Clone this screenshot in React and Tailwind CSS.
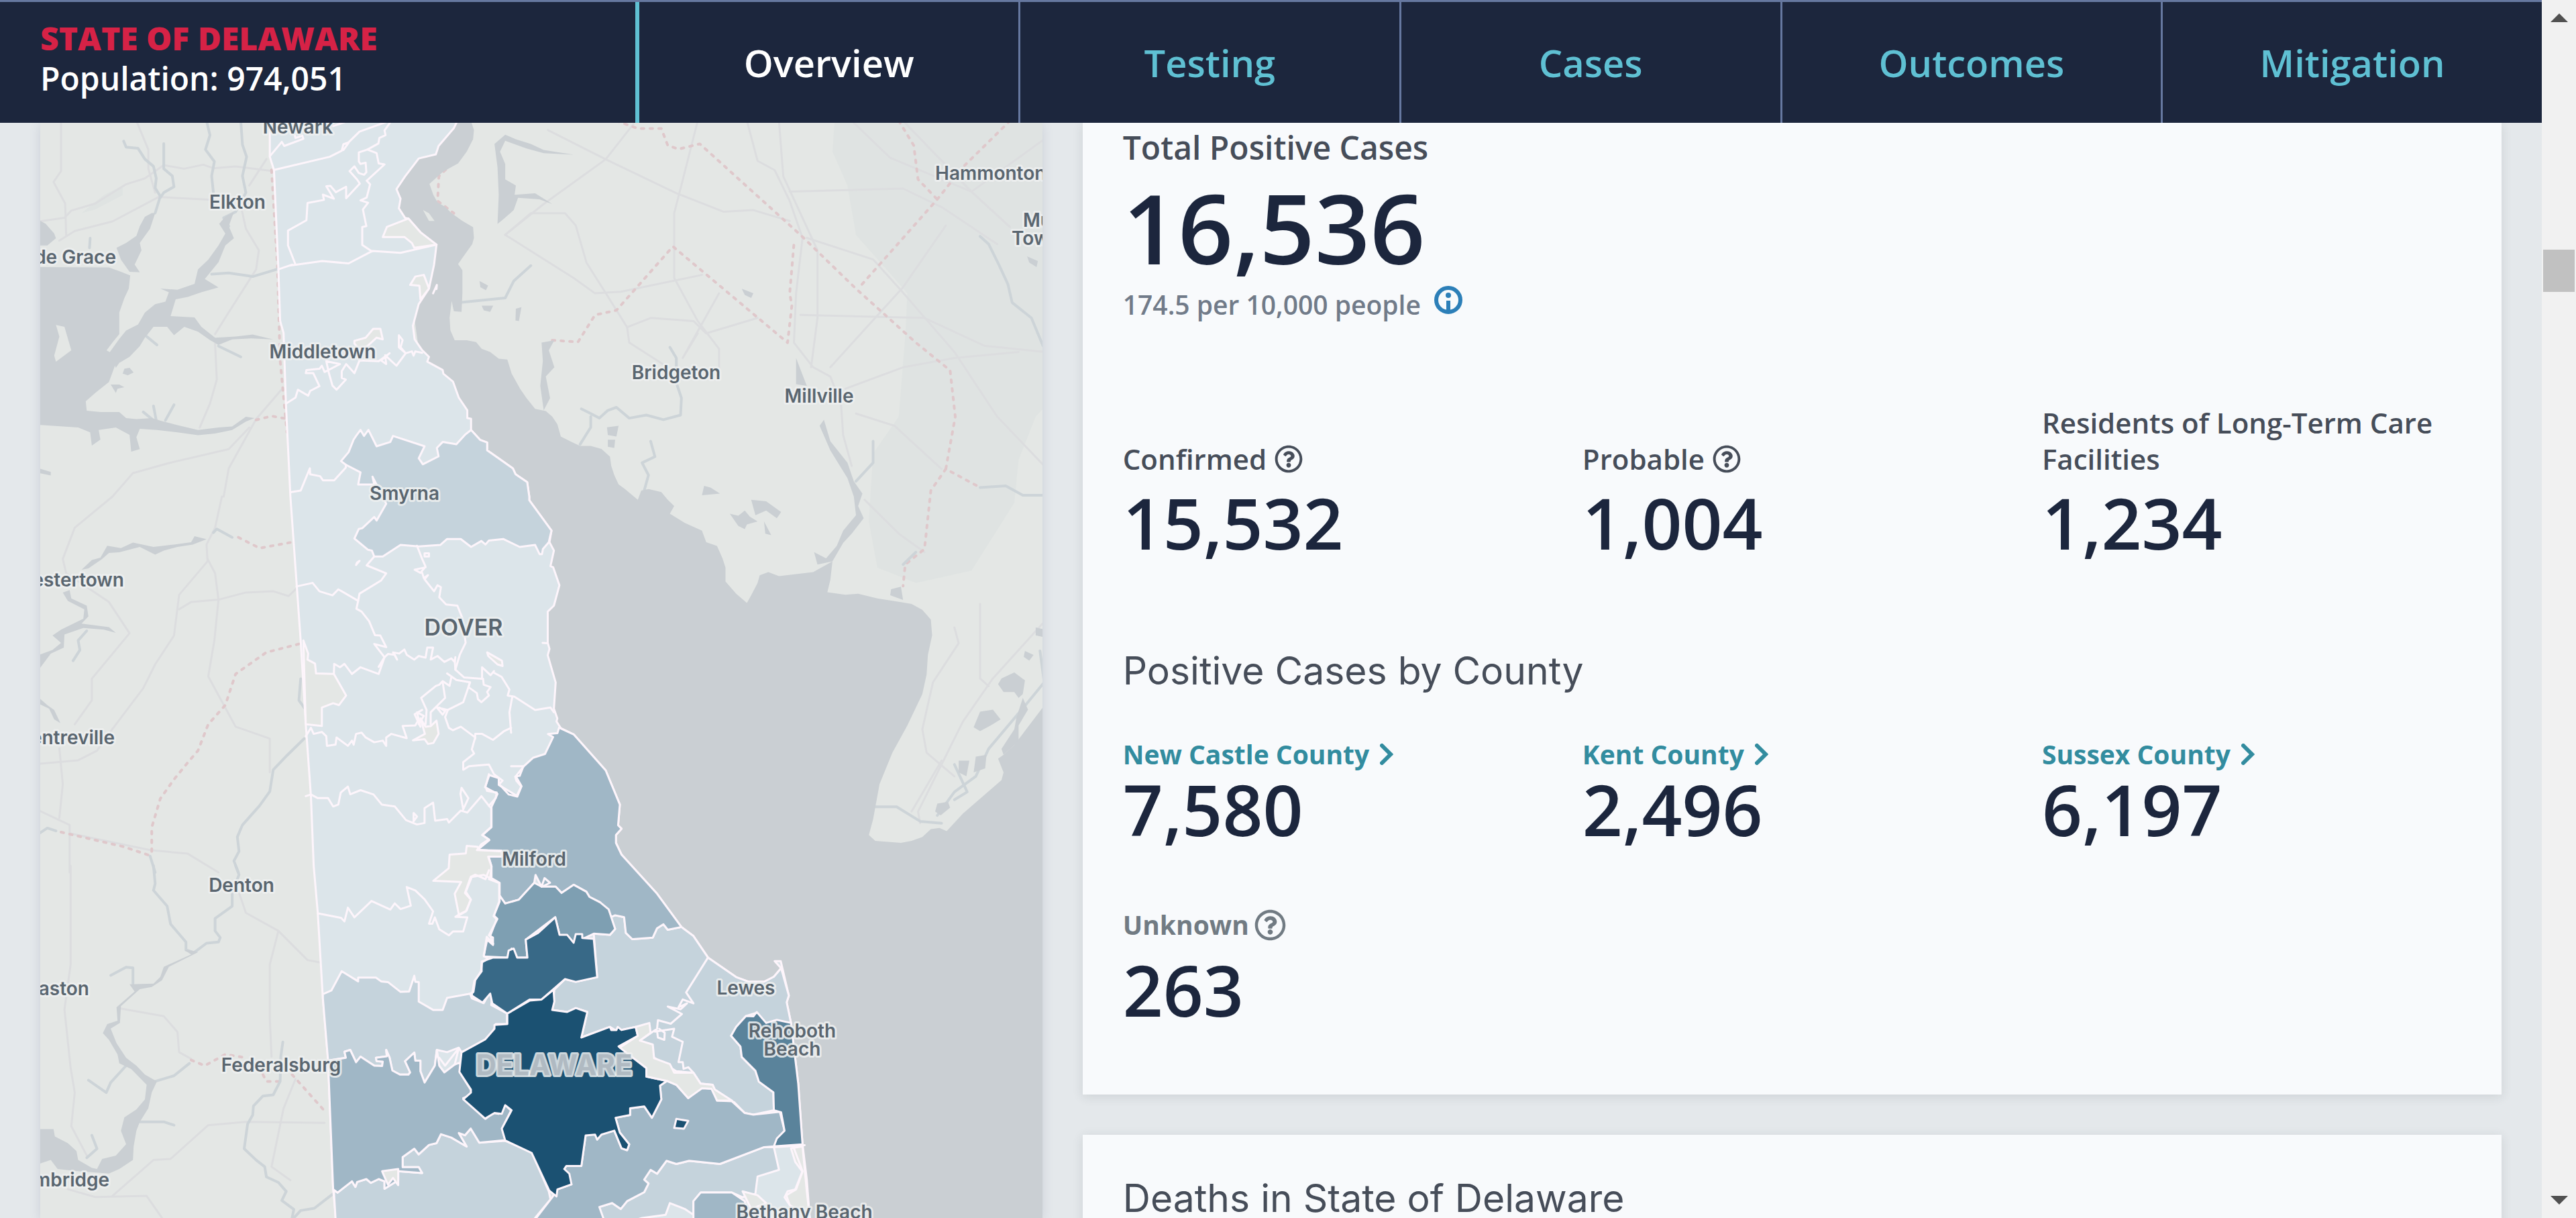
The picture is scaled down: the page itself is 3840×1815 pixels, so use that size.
import { FaRegQuestionCircle } from "react-icons/fa";

/* ------------------------------------------------------------------ map */

// Map outlines are digitised per tile; each tile has its own origin and scale.
const TILES = {
  a: [40, 180, 1.96, 2.8],
  b: [40, 740, 1.96, 2.8],
  c: [40, 1290, 1.96, 2.987],
  d: [600, 180, 1.568, 2.178],
  e: [600, 900, 1.568, 1.7137],
};

function toPath(src) {
  let tile = TILES.a;
  let cmd = "M";
  let out = "";
  for (const t of src.trim().split(/\s+/)) {
    if (TILES[t]) tile = TILES[t];
    else if (t === "M") cmd = "M";
    else if (t === "Z") {
      out += "Z";
      cmd = "M";
    } else {
      const [x, y] = t.split(",").map(Number);
      out += `${cmd}${(tile[0] + x / tile[2]).toFixed(1)} ${(tile[1] + y / tile[3]).toFixed(1)}`;
      cmd = "L";
    }
  }
  return out;
}

const COAST_NORTH =
  "a 1258,0 1248,30 1203,105 1195,140 1145,157 1105,232 1080,285 1092,325 1087,365 1105,405 1115,408 1150,465 1197,517 1190,600 1175,700 1145,765 1128,855 1133,912 1155,957 1175,985 1170,1005 1215,1040 1217,1055 1245,1088 1262,1155 1287,1208 1287,1240 1298,1243 1298,1290 1325,1332 1345,1342 1345,1375 1375,1405 1420,1450 1428,1475 1462,1508 1468,1568 b 1468,15 1533,142 1527,190 1540,225 1530,290 1538,295 1556,370 1540,455 1522,480 1522,610 1527,635 1522,662 1545,775 1540,885 1550,925";
const COAST_SOUTH =
  "e 360,300 370,317 400,333 475,425 508,512 504,565 512,574 499,590 499,610 512,640 595,740 652,825 680,848 714,903 780,953 810,965 845,965 868,952 885,930 870,912 884,912 903,1000 898,1017 908,1070 925,1225 935,1380 945,1470 952,1568";
const DELAWARE = `${COAST_NORTH} ${COAST_SOUTH} e 952,1600 c 904,1600 903,1568 895,1440 880,860 865,590 850,210 838,0 b 830,1250 815,950 800,600 770,0 a 757,1180 750,885 740,835 735,620 722,205 710,150 710,0 Z`;

const BAY =
  "d 160,0 167,30 165,60 150,100 130,138 95,165 63,205 72,240 82,265 98,278 115,300 140,325 165,345 167,380 163,400 140,445 130,465 140,485 140,560 138,620 120,618 115,585 110,640 112,680 122,712 150,712 172,718 185,740 205,750 225,772 245,775 255,820 275,870 290,900 310,935 335,942 350,960 362,985 370,1025 395,1042 415,1055 440,1055 465,1065 485,1090 488,1120 495,1150 505,1180 520,1195 550,1230 558,1200 575,1195 605,1205 620,1230 635,1250 625,1275 660,1305 700,1330 710,1368 735,1380 748,1420 755,1450 755,1495 780,1535 805,1565 815,1540 830,1500 835,1475 855,1465 880,1478 960,1465 1005,1430 1000,1490 993,1530 1035,1538 1065,1535 1110,1550 1165,1562 e 1190,0 1215,15 1235,40 1238,80 1228,130 1225,180 1215,230 1180,310 1145,380 1115,460 1105,520 1100,550 1090,590 1105,605 1165,610 1190,605 1215,595 1235,575 1255,572 1272,580 1310,535 1400,450 1405,430 1392,395 1405,385 1430,360 1496,265 1520,265 1520,1600 800,1600 700,1200 300,600 250,250 d 250,1400 100,1000 a 1150,1000 1100,500 d -20,100 80,0 Z";

const WATERS = [
  "a 30,410 55,430 80,470 85,490 60,520 30,520 Z",
  "a 30,610 240,612 275,630 302,645 298,700 285,740 270,800 270,890 250,925 233,958 248,970 258,1020 240,1090 200,1135 172,1170 175,1210 215,1215 270,1215 290,1240 320,1245 365,1240 400,1255 440,1270 500,1290 560,1280 600,1275 640,1235 665,1240 640,1255 600,1290 550,1305 500,1312 440,1300 380,1290 330,1285 320,1320 330,1370 305,1380 300,1310 260,1280 210,1290 215,1330 190,1355 185,1300 150,1280 30,1268 Z",
  "a 260,1030 240,970 270,910 290,875 325,850 345,800 375,765 405,755 415,715 390,700 440,705 490,680 500,620 530,580 560,520 580,470 562,430 580,400 605,380 590,440 605,490 580,520 560,590 520,660 560,695 510,715 470,735 435,745 420,815 490,820 510,860 550,905 610,900 660,892 720,912 655,908 600,912 560,935 535,915 500,880 460,860 430,895 410,860 370,860 345,905 330,940 300,985 270,1010 Z",
  "a 365,385 345,400 330,440 320,480 290,510 262,530 275,580 300,630 330,632 315,600 335,540 330,510 360,450 375,385 Z",
  "a 285,1035 300,1030 312,1050 295,1062 280,1055 Z",
  "a 245,1100 270,1100 285,1112 265,1118 260,1135 Z",
  "a 36,1450 70,1465 70,1480 36,1470 Z",
  "c 30,1172 78,1172 82,1205 120,1235 145,1270 150,1310 190,1345 205,1350 220,1305 260,1290 290,1240 275,1180 285,1120 320,1085 345,1040 350,975 305,905 270,880 265,840 240,775 222,745 235,705 265,690 262,630 315,560 300,528 370,525 390,495 400,450 480,395 460,375 490,380 500,385 415,450 395,510 365,540 330,550 275,625 272,700 245,725 262,790 290,855 320,890 345,930 380,960 365,1010 355,1080 330,1140 320,1180 312,1250 310,1310 270,1350 240,1370 150,1360 90,1350 70,1310 30,1330 Z",
  "b 36,660 75,640 100,610 75,580 100,555 165,510 168,470 120,435 105,400 125,390 130,425 175,455 180,500 160,530 240,545 260,568 225,555 165,548 110,575 108,630 70,655 36,720 Z",
  "b 160,305 190,265 215,255 235,205 275,215 310,192 370,210 430,200 480,190 490,165 525,178 485,200 440,210 400,225 375,242 330,210 270,232 240,235 220,260 180,300 Z",
  "b 36,840 60,870 80,890 98,945 80,930 65,885 36,865 Z",
  "d 215,75 240,45 265,60 300,75 330,95 400,110 330,105 290,90 240,65 228,100 240,140 240,190 265,210 262,240 310,235 350,270 320,255 270,250 260,290 235,320 222,335 225,240 222,150 Z",
  "d 325,720 355,712 342,745 355,800 335,830 345,900 330,940 322,860 328,780 Z",
  "d 920,770 945,860 920,855 Z",
  "d 985,970 1000,1040 1040,1110 1055,1170 1075,1210 1065,1250 1078,1290 1050,1340 1030,1370 1005,1430 970,1440 962,1400 990,1420 1015,1380 1030,1330 1060,1280 1055,1220 1040,1160 1000,1070 975,990 Z",
  "d 765,1275 785,1282 800,1265 812,1285 830,1300 805,1310 800,1325 785,1315 Z",
  "d 815,1230 850,1235 885,1270 875,1290 850,1265 825,1280 Z",
  "d 845,1300 862,1345 848,1340 Z",
  "d 705,1185 720,1190 742,1210 700,1215 Z",
  "d 478,995 505,990 500,1025 480,1020 Z",
  "d 480,1035 497,1035 495,1062 480,1058 Z",
  "d 180,520 200,535 195,550 182,540 Z",
  "d 185,600 212,600 205,620 190,615 Z",
  "d 265,610 278,605 272,650 264,648 Z",
  "d 793,545 820,560 815,575 800,565 Z",
  "d 1460,440 1485,455 1482,475 1465,460 Z",
  "d 1142,1520 1165,1512 1170,1555 1140,1540 Z",
  "e 1400,190 1430,175 1455,195 1450,230 1440,240 1430,225 1405,225 1392,205 Z",
  "e 1350,275 1380,270 1398,295 1375,310 1350,325 1335,315 Z",
  "e 1455,120 1475,130 1465,145 1452,135 Z",
  "e 1340,390 1365,385 1362,420 1335,430 Z",
  "e 1300,400 1325,400 1318,440 1300,430 Z",
  "e 1250,510 1275,505 1280,520 1258,540 1245,530 Z",
  "e 1450,240 1462,270 1440,310 1440,350 1405,385 1400,370 1430,320 1435,290 Z",
  "e 1480,60 1500,65 1500,85 1480,80 Z",
];

// Narrow creeks and rivers drawn as strokes.
const CREEKS = [
  "a 283,85 290,110 325,115 345,160 370,190 378,240 375,280 390,315 375,385",
  "a 400,95 400,200 425,230 430,275 400,300 390,320",
  "a 525,0 535,60 522,120 548,170 540,230 545,300",
  "a 625,0 630,100 642,150 630,230 640,300 610,380 575,405 590,440",
  "a 540,640 590,635 660,650 735,618",
  "a 350,900 380,935",
  "a 185,490 183,530",
  "a 560,940 625,985",
  "a 340,1215 370,1250 M 370,1190 378,1250 M 430,1185 405,1250",
  "b 600,170 555,135 545,150",
  "b 175,560 150,600 155,640 135,685",
  "b 800,760 795,850 835,930",
  "b 810,1010 760,1080 720,1140 710,1230 680,1290 630,1370 615,1420 620,1480 605,1520 618,1568",
  "b 36,1405 60,1383 85,1395",
  "b 360,1500 375,1568",
  "c 370,0 375,80 370,110 410,180 420,260 465,340 465,375 485,385",
  "c 610,0 620,40 600,120 600,180 550,235 550,290 565,320 560,340 525,345 490,385",
  "c 310,525 310,455 290,452 245,488",
  "c 180,955 232,1010 245,965 290,890",
  "c 375,960 430,935 475,880",
  "c 748,785 742,850 740,960 720,1020 690,1025 662,1070 660,1110 645,1150 635,1260 670,1310 695,1340 700,1385 735,1410 758,1450 745,1490 780,1530 775,1568",
  "c 780,1568 800,1535 840,1525 895,1460",
  "c 330,1140 400,1140 430,1155",
  "c 190,1200 205,1260 175,1300",
  "d 418,935 440,950 460,965 480,940 500,930 530,965 570,955 610,970 650,955 652,900 640,850 640,770 625,735",
  "d 440,960 440,995 415,1050",
  "d 580,1040 590,1090 560,1110 575,1150 565,1200",
  "d 1350,375 1370,400 1395,470 1415,530 1425,590 1470,640 1497,730",
  "d 1350,1190 1410,1185 1450,1215 1497,1215",
  "d 1060,1170 1100,1110 1100,1040",
  "d 130,590 240,575 260,520 300,470",
  "d 1170,1440 1200,1400",
  "e 1105,518 1155,518 1210,555 1260,560",
  "e 1490,120 1500,200 1455,260 1370,370 1340,440 1290,480 1250,540",
  "e 1290,410 1320,480 1290,500",
];

const ROADS = [
  "a 36,420 110,405 130,375 200,345 290,265 345,240 400,185 460,200 515,183 545,198 610,190 720,210",
  "a 95,500 140,460 250,420 385,318 550,330",
  "a 100,0 100,210 78,255 112,345 115,480",
  "a 320,0 355,120 355,200 375,300",
  "a 620,320 640,450 678,540 670,620 585,810 550,890",
  "a 550,930 555,1080 535,1180 505,1280",
  "a 745,1120 670,1245 590,1450 575,1568",
  "a 250,1568 310,1470 410,1430 590,1370 650,1280",
  "a 700,160 650,270",
  "b 570,0 550,130 525,200 528,270 445,410 430,580 375,700 340,800 250,970",
  "b 528,260 550,320 560,430 548,600 530,750 610,960 710,1010 710,1150",
  "b 445,470 480,440 560,430 640,400 720,395 765,415 790,380",
  "b 250,0 140,130 105,260 115,320 240,440 300,570 190,760 190,850 140,950",
  "b 95,1050 105,1200 95,1340",
  "b 36,1115 150,1100 205,1060 250,970",
  "b 36,1310 125,1370 125,1568",
  "b 125,1405 360,1475 470,1490 560,1568",
  "c 128,0 128,440 110,640 128,900 140,1010 130,1160 175,1290",
  "c 620,120 640,210 735,290 820,420 855,430",
  "c 735,290 710,440 710,680 715,850",
  "c 270,635 400,670 440,740 445,830 480,860",
  "c 250,1470 370,1310 420,1305 530,1155 640,1140 870,1145",
  "c 120,1440 200,1475 350,1470 395,1568",
  "c 785,950 750,1080 715,1340 770,1400",
  "d 805,0 830,130 870,160 905,260 935,380 920,560 915,720 960,800 1000,830 1025,920 1030,1020 1050,1120",
  "d 340,30 475,125 640,235 750,295 820,290 905,325",
  "d 540,10 475,125 330,270 240,370",
  "d 690,0 650,220 635,300 635,510 690,650 740,740 740,830",
  "d 240,370 300,300 380,300 405,340 430,460 480,570 525,670 530,720 620,800",
  "d 240,370 400,510 450,560 510,555 700,500",
  "d 880,0 890,180 970,420 970,640 955,800",
  "d 905,230 1170,220 1260,280 1390,400",
  "d 1170,0 1330,230 1420,345",
  "d 1050,0 1140,120 1330,230 1500,60",
  "d 945,380 1100,450 1165,550 1290,750 1390,960 1500,1120",
  "d 1270,340 1170,540 1000,800",
  "d 930,630 1220,640 1360,730 1500,750",
  "d 1035,870 1170,800 1290,770 1440,750",
  "d 1060,950 1150,990 1260,1130",
  "d 525,670 580,640 680,650 710,690 830,640",
  "d 690,690 655,770 740,560",
  "d 1080,1230 1160,1340 1220,1400",
  "e 1496,50 1380,190 1310,300 1205,530 1210,560",
  "e 1350,0 1350,190 1370,210",
  "e 1290,60 1300,100 1240,200 1215,320 1225,380 1290,440",
  "e 1260,400 1190,530",
];

const RAILS = [
  "d 500,0 550,25 605,25 620,80 645,92 695,75 930,370 1060,545 1200,720 1280,810 1292,960 1270,1130 1350,1190",
  "d 1270,1130 1235,1200 1220,1390 1175,1440 1170,1510",
  "d 350,712 410,718 450,630 500,615 632,408 900,720 910,600 905,560 915,400",
  "d 1160,0 1195,80 1205,190 1250,255",
  "d 1420,0 1310,150 1250,255 1065,545",
  "d 145,100 85,180 82,260 120,300",
  "b 618,170 680,215 775,190",
  "b 795,615 700,650 610,740 580,870 530,950 500,1060 470,1110 430,1180 390,1260 365,1380 365,1490",
  "b 100,1400 280,1460 365,1500",
  "a 670,1248 715,1232 755,1242",
  "a 715,205 732,600 740,1000 760,1300",
  "c 480,865 520,890 580,840 640,855",
  "c 690,930 700,960 740,960",
  "c 775,930 875,1100",
];

const SCRUB = [
  "d 1010,0 1005,100 1040,210 1060,370 1130,480 1180,560 1175,700 1160,960 1100,1080 1090,1300 1110,1450 1200,1500 1330,1460 1430,1240 1440,1100 1480,960 1500,930 1500,0 Z",
  "a 160,385 225,310 280,270 280,310 200,370 Z",
];

const REGIONS = [
  {
    fill: "#c5d3dc",
    shapes: [
      "a 955,1330 962,1315 975,1290 985,1315 998,1290 1022,1358 1062,1340 1070,1315 1162,1358 1145,1408 1157,1433 1203,1400 1198,1365 1215,1340 1255,1350 1280,1310 1298,1290 1325,1332 1345,1342 1345,1375 1375,1405 1420,1450 1428,1475 1462,1508 1468,1568 b 1468,15 1533,142 1525,190 1508,218 1505,240 1498,240 1485,202 1440,210 1392,177 1350,183 1340,200 1328,185 1298,210 1268,177 1228,177 1208,202 1145,208 1092,202 1040,250 1015,250 1008,225 997,222 957,175 970,135 980,132 1015,85 1022,100 1050,30 a 1022,1518 1010,1485 1015,1518 968,1518 975,1467 932,1435 918,1420 940,1383 Z",
      "c 865,590 865,572 890,555 920,470 968,515 968,498 1020,498 1035,515 1055,518 1092,562 1117,560 1132,490 1135,517 1145,518 1145,605 1187,642 1215,642 1228,588 1295,570 1300,590 1335,612 1350,570 1360,577 1357,620 1403,658 1403,705 1370,705 1363,740 1340,778 1270,830 1262,810 1228,830 1198,820 1192,890 1162,965 1150,915 1150,868 1135,868 1132,832 1105,870 1120,920 1115,930 1090,930 1068,912 1060,855 1050,820 1052,848 1020,855 1022,870 1040,872 1038,892 1015,890 985,860 975,850 962,875 945,820 928,828 932,855 880,868 Z",
      "c 903,1600 897,1445 908,1455 950,1405 960,1430 965,1408 992,1395 1005,1412 1028,1395 1045,1405 1045,1438 1085,1400 1085,1360 1155,1368 1145,1342 1098,1342 1098,1297 1132,1260 1145,1285 1175,1243 1197,1235 1210,1195 1240,1210 1285,1250 1262,1190 1280,1200 1297,1170 1322,1233 1398,1225 1475,1275 1525,1450 1530,1485 1485,1568 1480,1600 Z",
      "e 447,842 485,845 497,830 486,800 497,795 518,800 522,840 537,856 585,852 595,828 610,818 620,832 652,825 680,848 714,903 780,953 810,965 845,965 868,952 885,930 903,1000 898,1017 908,1070 870,1065 850,1075 825,1045 803,1052 780,1080 768,1103 790,1130 793,1157 825,1192 833,1220 867,1247 868,1293 820,1304 800,1300 775,1272 735,1255 725,1228 697,1225 680,1197 640,1193 590,1160 555,1115 575,1095 545,1080 500,1090 485,1080 418,1107 432,1042 405,1032 385,1042 350,1037 355,985 380,958 405,965 455,953 Z",
      "e 460,1600 460,1540 490,1530 510,1545 525,1525 565,1502 575,1480 565,1470 580,1445 595,1455 617,1422 640,1430 670,1422 742,1430 845,1387 868,1387 880,1445 830,1462 825,1505 795,1515 770,1503 697,1503 680,1525 680,1560 660,1545 625,1530 615,1560 560,1568 Z",
    ],
  },
  {
    fill: "#a0b7c6",
    shapes: [
      "e 366,316 400,333 475,425 508,512 504,565 512,574 499,590 499,610 512,640 595,740 652,825 620,832 610,818 595,828 585,852 537,856 522,840 518,800 497,795 486,800 462,762 437,748 430,735 400,717 372,738 358,722 325,722 311,692 308,712 272,755 240,765 227,745 227,712 208,700 208,670 200,640 232,645 232,632 175,628 203,603 187,590 208,570 208,518 222,485 193,468 203,437 225,445 225,462 267,490 278,465 265,440 283,415 305,393 333,383 352,340 340,332 362,330 Z",
      "c 880,868 932,855 928,828 945,820 962,875 975,850 985,860 1015,890 1038,892 1040,872 1022,870 1020,855 1052,848 1050,820 1060,855 1068,912 1090,930 1115,930 1120,920 1105,870 1132,832 1135,868 1150,868 1150,915 1162,965 1192,890 1198,820 1205,890 1220,920 1250,885 1268,875 1265,920 1298,1000 1298,1020 1275,1035 1340,1127 1362,1100 1378,1105 1397,1065 1415,1090 1388,1170 1398,1222 1322,1233 1297,1170 1280,1200 1262,1190 1285,1250 1240,1210 1210,1195 1197,1235 1175,1243 1145,1285 1132,1260 1098,1297 1098,1342 1145,1342 1155,1368 1085,1360 1085,1400 1045,1438 1045,1405 1028,1395 1005,1412 992,1395 965,1408 960,1430 950,1405 908,1455 895,1440 Z",
      "e 618,1218 640,1228 668,1262 697,1235 725,1238 735,1268 770,1270 800,1300 820,1304 882,1297 893,1345 868,1385 845,1387 742,1430 670,1422 640,1430 617,1422 595,1455 580,1445 565,1470 575,1480 565,1502 525,1525 510,1545 490,1530 460,1540 480,1600 290,1600 350,1515 362,1495 395,1482 378,1443 383,1435 418,1435 428,1357 495,1345 512,1390 525,1395 530,1380 508,1350 498,1312 532,1305 532,1288 565,1283 583,1312 605,1265 602,1230 Z",
      "e 680,1600 680,1525 697,1503 770,1503 800,1525 815,1600 Z",
    ],
  },
  {
    fill: "#7e9fb2",
    shapes: [
      "e 227,745 240,765 272,755 308,712 325,722 358,722 372,738 400,717 430,735 437,748 462,762 482,780 497,830 485,845 447,842 402,865 367,845 357,800 288,857 292,903 268,903 255,880 245,903 190,900 197,850 212,868 205,848 220,805 213,797 227,760 Z",
    ],
  },
  {
    fill: "#386987",
    shapes: [
      "e 185,913 212,903 245,903 248,885 260,880 268,903 292,903 288,857 317,840 357,800 367,845 385,845 400,865 405,843 420,843 420,853 447,855 455,953 405,965 380,958 325,1010 297,1010 245,1046 210,1020 205,995 187,1018 162,1000 168,963 185,938 Z",
    ],
  },
  {
    fill: "#5a839b",
    shapes: [
      "e 803,1052 820,1053 828,1042 850,1070 875,1062 908,1070 925,1225 935,1380 868,1385 875,1365 893,1345 885,1298 868,1293 867,1247 833,1220 825,1192 793,1157 790,1130 768,1103 780,1080 Z",
    ],
  },
  {
    fill: "#1b5172",
    shapes: [
      "e 245,1046 297,1013 325,1010 353,985 355,1015 350,1037 385,1042 405,1032 432,1042 418,1107 485,1080 488,1088 500,1088 503,1080 512,1088 545,1080 550,1103 505,1130 540,1160 570,1185 570,1207 618,1218 602,1230 605,1265 583,1312 565,1283 532,1288 532,1305 498,1312 508,1350 530,1380 525,1395 512,1390 495,1345 465,1355 455,1368 450,1355 428,1357 418,1435 383,1435 378,1443 390,1455 395,1482 362,1495 360,1513 343,1498 302,1402 240,1370 232,1340 255,1293 240,1280 232,1302 215,1300 193,1314 142,1265 160,1248 160,1240 133,1195 138,1145 193,1112 215,1085 215,1075 245,1073 Z",
      "e 640,1315 668,1320 658,1340 635,1338 Z",
    ],
  },
];

// Unassigned land enclosed by ZIP-code borders.
const GAPS = [
  "a 1115,408 1150,465 1197,517 1132,530 1125,510 1103,485 1040,485 1052,443 Z",
  "a 1135,650 1160,643 1175,700 1150,745 1147,688 1120,685 Z",
  "a 957,930 957,918 990,905 1012,868 1033,868 1040,912 1022,905 995,940 970,950 Z",
  "b 808,600 822,655 820,680 842,697 845,738 897,740 933,830 912,870 895,862 862,880 862,957 815,950 Z",
  "b 1150,925 1165,960 1180,958 1197,935 1203,990 1188,1028 1172,1032 1162,1012 1128,1017 1163,990 Z",
  "b 1345,650 1388,685 1390,707 1375,700 1348,665 Z",
  "e 150,618 175,620 178,628 232,632 232,645 200,645 208,670 205,700 190,692 162,697 148,735 160,755 148,785 132,795 122,740 137,710 72,707 108,675 110,640 148,637 Z",
  "e 545,1080 577,1070 580,1095 555,1115 585,1125 588,1160 625,1175 635,1197 680,1197 697,1225 725,1228 730,1240 770,1268 735,1268 722,1238 700,1237 668,1262 640,1228 618,1218 570,1207 570,1185 540,1160 508,1133 550,1103 Z",
  "c 1038,1360 1085,1350 1085,1422 1070,1390 1055,1420 Z",
  "e 908,1390 935,1385 945,1500 952,1568 905,1535 897,1510 920,1495 935,1450 918,1425 Z",
  "e 795,1500 830,1510 850,1530 815,1545 Z",
];

const BORDERS = [
  // New Castle County
  "a 710,148 745,88 752,105 808,75 805,62 785,72 783,60 M 895,22 930,5",
  "a 722,205 885,150 920,125 925,98 940,90 972,45 1050,5 M 925,98 940,92 925,122",
  "a 1065,0 1045,40 1048,60 1030,72 1027,95 995,120 970,132 970,170 975,180 990,175 992,215 985,225 970,218 957,190 943,210 965,245 973,262 933,323 933,275 903,298 887,272 875,273 897,325 865,308 868,330 820,343 817,415 763,458 763,520 785,600",
  "a 995,120 1022,135 1028,178 1045,182 993,250 1003,265 993,320 975,332 997,342 982,370 992,440 980,443 980,518 1008,545",
  "a 735,620 765,605 863,585 940,595 1010,543 1092,551 1197,517 M 765,605 775,600",
  "a 757,1180 785,1155 792,1122 822,1147 828,1127 855,1107 837,1053 815,1053 817,1040 855,1035 862,1022 870,1048 915,1015 875,1003 882,1050 893,1105 905,1122 932,1080 920,1073 920,1045 933,1015 957,1053 972,1000 1028,1003 1060,970 1035,1000 1050,1015 1047,978 1080,1022 1107,970 1125,962 1130,980 1135,962 1155,968 M 1107,970 1087,945 1087,895 1098,915 1092,945 1107,970",
  "a 1187,720 1198,685 1197,702",
  "a 770,1550 800,1543 827,1450 828,1475 857,1483 865,1500 898,1500 932,1447 932,1435",
  // Kent County
  "b 1015,250 993,287 1050,320 1035,350 972,405 968,435 910,387 893,412 855,395 835,360 788,375 M 962,285 972,268 965,275 962,285",
  "b 968,435 963,468 978,480 1000,520 1017,578 1033,580 1050,628 1015,615 1045,670 1028,740 975,712 950,740 928,698 915,712 898,698 897,740 M 1045,670 1028,710",
  "b 1045,670 1055,657 1075,660 1082,680 1070,650 1088,655 1103,638 1110,660 1132,680 1145,665 1165,672 1170,630 1187,630 1180,680 1200,665 1220,690 1240,675 1250,690 1252,670",
  "b 1140,205 1155,260 1165,292 1150,318 1133,305 1165,295 M 1155,318 1160,340 1172,328 1162,345 1190,395 1200,370 1210,378 1205,420 1225,450 1258,455 1272,505 1282,610 1265,660 1252,722 1278,755 1330,760 1330,712 1355,745 1365,728",
  "b 1162,237 1175,237 1175,250 1162,250 Z",
  "b 1252,722 1250,680",
  "b 1365,735 1387,752 1410,805 1405,830 1425,835 1485,890 1530,880 1540,900",
  "b 1228,738 1255,765 1295,775 1275,858 1230,890 1222,920 1233,965 1245,975 1268,960 1310,1005 1300,1055 1307,1072 1275,1108 1275,1140 1292,1125 1350,1118 1365,1158 1390,1185 1380,1200 1408,1243 1433,1252 1445,1210 1430,1185 1427,1168 1440,1165 1450,1128 M 1240,755 1235,790 1215,770 1205,785 1195,790 1152,840 1168,890 1165,950",
  "b 1215,775 1222,840 1180,900 1180,950 M 1205,880 1222,895 1215,910 1198,880 1230,890",
  "b 1295,775 1290,795 1315,820 1318,845 1328,858 1350,830 1345,815 1355,795 1335,785 1333,760",
  "b 1418,838 1410,900 1415,985 M 1415,965 1395,978 1362,1015 1330,990 1310,990 1310,1010",
  "b 1155,890 1133,908 1150,960 1140,900 1160,915 1145,950 M 1450,1125 1415,1125 M 1507,610 1522,612",
  "b 815,1000 830,965 838,990 862,982 875,1000 877,1040 902,1035 905,1005 938,1040 950,1018 955,1035 962,990 978,985 990,1005 1015,1025 1040,1018 1050,1040 1050,1005 1065,990 1110,1008 1098,957 1135,955 1145,930",
  "b 815,1250 830,1243 850,1258 880,1258 895,1293 910,1285 917,1235 938,1210 945,1242 975,1225 1013,1243 1037,1285 1075,1293 1108,1350 1140,1368 1162,1362 1162,1300 1187,1277 1193,1352 1228,1345 1233,1360 1268,1310 1287,1318 1328,1250 1350,1290 M 1270,1215 1290,1258 1275,1305 1267,1240 Z M 1130,1320 1140,1335 1130,1355 Z",
  "b 1350,1158 1340,1210 1345,1228 1373,1235 1370,1258 1350,1290 1357,1300 1357,1378 1330,1412 1350,1430 1328,1450 1315,1475 1387,1477",
  // Sussex County
  "c 850,212 918,232 928,248 938,187 957,230 1007,157 1062,195 1075,168 1092,193 1122,178 1110,95 1135,110 1162,150 1187,203 1175,258 1185,258 1192,230 1205,283 1233,310 1245,293 1275,293 1287,230 1252,228 1265,215 1285,200 1297,150 1280,122 1297,50 1310,40 1340,60 1350,20",
  "c 1350,60 1380,77 1380,160 1365,222 1375,237 1350,310 1362,320 1362,353 1345,330 1335,400 1347,415 1330,430 1327,470 1310,510 1305,562 1295,570",
  "c 1205,855 1222,890 1262,812 1250,885",
  "e 714,903 663,992 680,1020 655,1010 645,1030 665,1020 650,1035 620,1028 653,1047 627,1072 597,1063 595,1085 555,1115",
  "e 590,1092 635,1085 630,1105 655,1118 645,1170 655,1170 657,1187 668,1183 680,1197 M 595,1090 597,1107 612,1113 613,1095 600,1085",
  "e 325,722 332,700 345,712 330,720",
  "e 868,1387 940,1382 M 915,1390 935,1448 918,1495 900,1500 893,1515 905,1535",
];

const PLACES = [
  ["Newark", 444, 199, "middle"],
  ["Elkton", 354, 311, "middle"],
  ["Havre de Grace", 173, 393, "end"],
  ["Middletown", 481, 534, "middle"],
  ["Smyrna", 603, 745, "middle"],
  ["Chestertown", 185, 874, "end"],
  ["Centreville", 171, 1109, "end"],
  ["Milford", 796, 1290, "middle"],
  ["Denton", 360, 1329, "middle"],
  ["Easton", 133, 1483, "end"],
  ["Federalsburg", 419, 1597, "middle"],
  ["Cambridge", 163, 1768, "end"],
  ["Hammonton", 1394, 268, "start"],
  ["Mullica", 1525, 338, "start"],
  ["Township", 1508, 365, "start"],
  ["Bridgeton", 1008, 565, "middle"],
  ["Millville", 1221, 600, "middle"],
  ["Lewes", 1112, 1482, "middle"],
  ["Rehoboth", 1181, 1546, "middle"],
  ["Beach", 1181, 1573, "middle"],
  ["Bethany Beach", 1199, 1816, "middle"],
];

function DelawareMap() {
  return (
    <svg
      viewBox="60 183 1494 1632"
      preserveAspectRatio="xMinYMin slice"
      className="block h-full w-full"
      role="img"
      aria-label="Map of Delaware cases by ZIP code"
      strokeLinejoin="round"
      strokeLinecap="round"
    >
      <rect x="0" y="100" width="1700" height="1900" fill="#e4e7e5" />
      <g fill="#dde2e1" opacity="0.8">
        {SCRUB.map((s) => (
          <path key={s} d={toPath(s)} />
        ))}
      </g>
      <g fill="none" stroke="#dcdddf" strokeWidth="3">
        {ROADS.map((s) => (
          <path key={s} d={toPath(s)} />
        ))}
      </g>
      <g fill="none" stroke="#dfc8cb" strokeWidth="4" strokeDasharray="4 9">
        {RAILS.map((s) => (
          <path key={s} d={toPath(s)} />
        ))}
      </g>
      <g fill="none" stroke="#cdd4d8" strokeWidth="4">
        {CREEKS.map((s) => (
          <path key={s} d={toPath(s)} />
        ))}
      </g>
      <g fill="#cacfd3">
        {WATERS.map((s) => (
          <path key={s} d={toPath(s)} />
        ))}
        <path d={toPath(BAY)} />
      </g>
      <path d={toPath("d 48,290 62,300 75,325 62,325 Z")} fill="#e4e7e5" />
      <path d={toPath("a 85,852 110,860 130,958 85,1005 80,980 95,900 Z")} fill="#e4e7e5" />
      <g stroke="#fdf5fb" strokeWidth="3">
        <path d={toPath(DELAWARE)} fill="#dce5ea" />
        {REGIONS.map((r) =>
          r.shapes.map((s) => <path key={s} d={toPath(s)} fill={r.fill} />)
        )}
        {GAPS.map((s) => (
          <path key={s} d={toPath(s)} fill="#e4e7e5" />
        ))}
        <g fill="none">
          {BORDERS.map((s) => (
            <path key={s} d={toPath(s)} />
          ))}
        </g>
      </g>
      <g
        className="font-['Inter',sans-serif] font-semibold"
        fontSize="28"
        fill="#5a6670"
        stroke="#eef0f0"
        strokeOpacity="0.85"
        strokeWidth="6"
        style={{ paintOrder: "stroke" }}
      >
        {PLACES.map(([name, x, y, anchor]) => (
          <text key={name} x={x} y={y} textAnchor={anchor}>
            {name}
          </text>
        ))}
        <text x="691" y="947" fontSize="34" textAnchor="middle">
          DOVER
        </text>
        <text x="826" y="1602" fontSize="42" textAnchor="middle" fill="#b0bac2" className="font-bold">
          DELAWARE
        </text>
      </g>
    </svg>
  );
}

/* ---------------------------------------------------------------- icons */

function InfoIcon() {
  return (
    <svg viewBox="0 0 42 42" className="size-[42px]" aria-hidden="true">
      <circle cx="21" cy="21" r="18" fill="none" stroke="#2c7fb8" strokeWidth="6" />
      <circle cx="21" cy="14" r="4" fill="#2c7fb8" />
      <path d="M18 22h6v16h-6z" fill="#2c7fb8" />
    </svg>
  );
}

function Chevron() {
  return (
    <svg viewBox="0 0 20 32" className="h-8 w-5" aria-hidden="true">
      <path d="M3 3 16 16 3 29" fill="none" stroke="currentColor" strokeWidth="6" strokeLinecap="round" />
    </svg>
  );
}

/* --------------------------------------------------------------- pieces */

const TABS = ["Overview", "Testing", "Cases", "Outcomes", "Mitigation"];

function Header() {
  return (
    <header className="flex h-[183px] shrink-0 border-t-3 border-[#6678a0] bg-[#1c263d]">
      <div className="w-1/4 px-15 pt-6">
        <p className="text-[48px] leading-[60px] font-extrabold text-[#d62246]">STATE OF DELAWARE</p>
        <p className="text-[48px] leading-[60px] font-semibold text-white">Population: 974,051</p>
      </div>
      <nav className="flex flex-1 divide-x-3 divide-[#6678a0] border-l-6 border-[#5fc0d3]">
        {TABS.map((tab, i) => (
          <a
            key={tab}
            href={`#${tab.toLowerCase()}`}
            aria-current={i === 0 ? "page" : undefined}
            className={
              i === 0
                ? "flex flex-1 items-center justify-center text-[56px] font-semibold text-white"
                : "flex flex-1 items-center justify-center text-[56px] font-semibold text-[#5fc0d3]"
            }
          >
            {tab}
          </a>
        ))}
      </nav>
    </header>
  );
}

function HelpButton({ label, large }) {
  return (
    <button type="button" aria-label={`About ${label}`}>
      <FaRegQuestionCircle className={large ? "size-[47px]" : "size-[42px]"} />
    </button>
  );
}

function Stat({ label, value, help }) {
  return (
    <div className="flex flex-col justify-end">
      <div className="flex items-center gap-3 text-[42px] leading-[54px] font-semibold text-[#464d59]">
        {label}
        {help && <HelpButton label={label} />}
      </div>
      <p className="mt-2 text-[105px] leading-[120px] font-semibold text-[#1c263d]">{value}</p>
    </div>
  );
}

function County({ name, value }) {
  return (
    <div>
      <a
        href={`#${name.toLowerCase().replaceAll(" ", "-")}`}
        className="flex items-center gap-4 text-[39px] leading-[44px] font-bold text-[#328c9f]"
      >
        {name}
        <Chevron />
      </a>
      <p className="text-[105px] leading-[120px] font-semibold text-[#1c263d]">{value}</p>
    </div>
  );
}

function Scrollbar() {
  return (
    <div className="flex w-[51px] shrink-0 flex-col items-center bg-[#f1f1f1]" aria-hidden="true">
      <svg viewBox="0 0 26 13" className="mt-5 h-[13px] w-[26px]">
        <path d="M13 0 26 13H0z" fill="#505050" />
      </svg>
      <div className="mt-[339px] h-[63px] w-[47px] bg-[#c1c1c1]" />
      <svg viewBox="0 0 26 13" className="mt-auto mb-5 h-[13px] w-[26px]">
        <path d="M0 0h26L13 13z" fill="#505050" />
      </svg>
    </div>
  );
}

export default function App() {
  return (
    <div className="flex h-screen overflow-hidden bg-[#e4e8eb] font-['Open_Sans',sans-serif]">
      <div className="flex min-w-0 flex-1 flex-col">
        <Header />
        <main className="grid min-h-0 flex-1 grid-cols-12 gap-15 overflow-hidden px-15">
          <section className="col-span-5 min-h-0 overflow-hidden shadow-[0_3px_15px_rgba(60,70,110,0.15)]">
            <DelawareMap />
          </section>

          <div className="col-span-7 flex min-h-0 flex-col gap-15">
            <section className="shrink-0 bg-[#f8fafc] px-15 pt-[9px] pb-24 shadow-[0_3px_15px_rgba(40,50,60,0.12)]">
              <h2 className="text-[48px] leading-[56px] font-semibold text-[#464d59]">Total Positive Cases</h2>
              <p className="mt-[10px] text-[144px] leading-[160px] font-semibold text-[#1c263d]">16,536</p>
              <div className="mt-3 flex gap-5 text-[39px] leading-[48px] font-semibold text-[#717b89]">
                174.5 per 10,000 people
                <button type="button" aria-label="About this rate" className="-mt-1 self-start">
                  <InfoIcon />
                </button>
              </div>

              <div className="mt-[125px] grid grid-cols-3 gap-15">
                <Stat label="Confirmed" value="15,532" help />
                <Stat label="Probable" value="1,004" help />
                <Stat label="Residents of Long-Term Care Facilities" value="1,234" />
              </div>

              <h3 className="mt-[129px] font-['Inter',sans-serif] text-[57px] leading-[64px] text-[#464d59]">
                Positive Cases by County
              </h3>
              <div className="mt-[70px] grid grid-cols-3 gap-15">
                <County name="New Castle County" value="7,580" />
                <County name="Kent County" value="2,496" />
                <County name="Sussex County" value="6,197" />
              </div>

              <div className="mt-22 flex items-center gap-2 text-[39px] leading-[48px] font-bold text-[#717b83]">
                Unknown
                <HelpButton label="unknown county" large />
              </div>
              <p className="mt-[13px] text-[105px] leading-[120px] font-semibold text-[#1c263d]">263</p>
            </section>

            <section className="shrink-0 bg-[#f8fafc] px-15 pt-[63px] pb-24 shadow-[0_3px_15px_rgba(40,50,60,0.12)]">
              <h3 className="font-['Inter',sans-serif] text-[57px] leading-[64px] text-[#464d59]">
                Deaths in State of Delaware
              </h3>
            </section>
          </div>
        </main>
      </div>
      <Scrollbar />
    </div>
  );
}
